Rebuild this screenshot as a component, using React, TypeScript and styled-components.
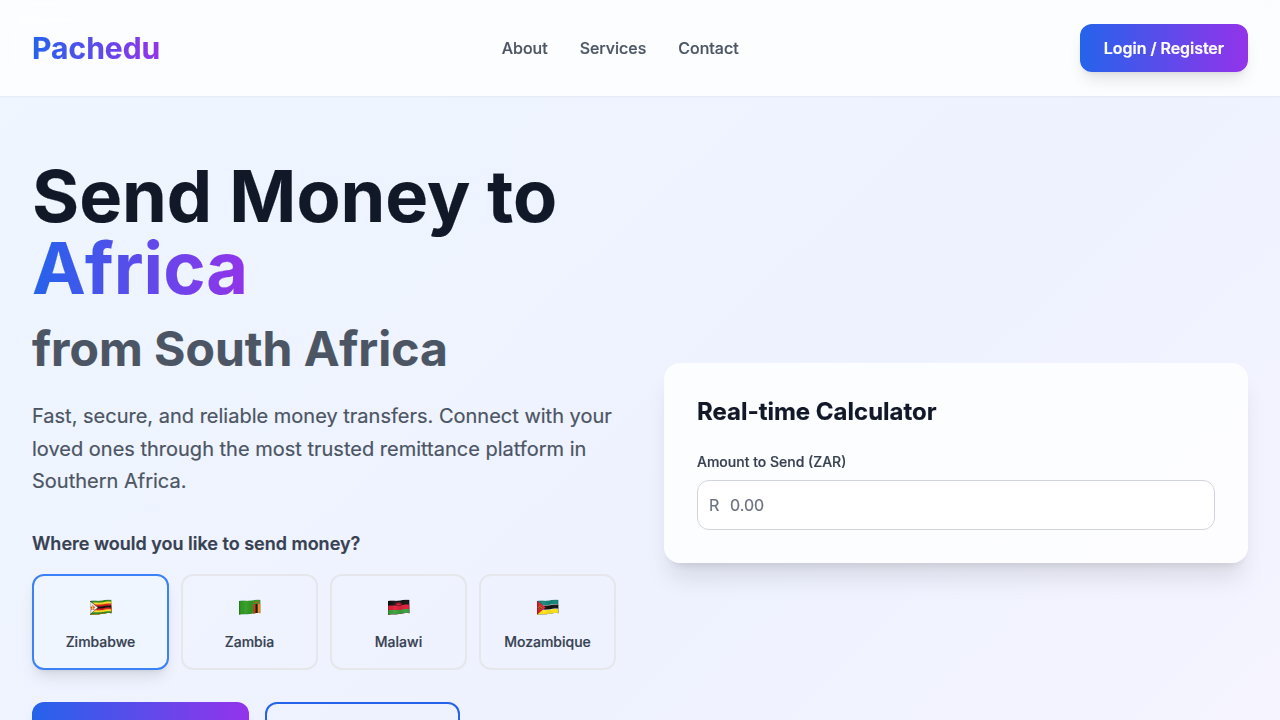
import React, { useId, useState } from 'react';
import styled, { createGlobalStyle, css } from 'styled-components';

const GlobalStyle = createGlobalStyle`
  *, *::before, *::after { box-sizing: border-box; }
  body {
    margin: 0;
    font-family: Inter, sans-serif;
    line-height: 1.5;
    color: #111827;
    -webkit-font-smoothing: antialiased;
    -webkit-text-stroke: 0.2px;
  }
  h1, h2, h3, p { margin: 0; }
  button, input { font: inherit; color: inherit; }
`;

const brandGradient = 'linear-gradient(to right, #2563eb, #9333ea)';
const softShadow = '0 10px 15px -3px rgba(0,0,0,.1), 0 4px 6px -4px rgba(0,0,0,.1)';

const Page = styled.div`
  height: 100vh;
  overflow: hidden;
  background: linear-gradient(to bottom right, #eff6ff, #eef2ff, #faf5ff) 0 0 / 100% 1240px no-repeat;
`;

const Header = styled.header`
  display: flex;
  align-items: center;
  justify-content: space-between;
  padding: 24px 32px;
  background: rgba(255, 255, 255, 0.8);
  backdrop-filter: blur(12px);
  box-shadow: 0 1px 2px 0 rgba(0, 0, 0, 0.05);
`;

const gradientText = css`
  background: ${brandGradient};
  background-clip: text;
  -webkit-background-clip: text;
  color: transparent;
`;

const Logo = styled.div`
  ${gradientText}
  font-size: 30px;
  line-height: 36px;
  font-weight: 700;
`;

const Nav = styled.nav`
  display: flex;
  gap: 32px;
`;

const NavLink = styled.a`
  color: #4b5563;
  font-weight: 500;
  text-decoration: none;
`;

const LoginButton = styled.button`
  width: 168px;
  border: 0;
  border-radius: 12px;
  padding: 12px 0;
  background: ${brandGradient};
  color: #fff;
  font-weight: 600;
  letter-spacing: -0.04px;
  white-space: nowrap;
  box-shadow: ${softShadow};
`;

const Hero = styled.main`
  display: grid;
  grid-template-columns: 1fr 1fr;
  gap: 48px;
  align-items: center;
  padding: 64px 32px;
`;

const Title = styled.h1`
  font-size: 72px;
  line-height: 1;
  font-weight: 700;
  margin-bottom: 24px;
`;

const Highlight = styled.span`
  ${gradientText}
`;

const Origin = styled.span`
  font-size: 48px;
  line-height: 1;
  color: #4b5563;
`;

const Lead = styled.p`
  font-size: 20px;
  line-height: 1.625;
  color: #4b5563;
  margin-bottom: 32px;
`;

const Question = styled.h3`
  font-size: 18px;
  line-height: 28px;
  font-weight: 600;
  color: #374151;
  margin-bottom: 16px;
`;

const Countries = styled.div`
  display: grid;
  grid-template-columns: repeat(4, 1fr);
  gap: 12px;
  margin-bottom: 32px;
`;

const CountryButton = styled.button<{ $selected: boolean }>`
  display: flex;
  flex-direction: column;
  align-items: center;
  gap: 8px;
  padding: 16px;
  border: 2px solid ${p => (p.$selected ? '#3b82f6' : '#e5e7eb')};
  border-radius: 12px;
  background: ${p => (p.$selected ? '#eff6ff' : 'transparent')};
  box-shadow: ${p => (p.$selected ? softShadow : 'none')};
`;

const FlagBox = styled.span`
  display: flex;
  height: 32px;
  padding-top: 7px;
`;

const CountryName = styled.span`
  font-size: 14px;
  line-height: 20px;
  font-weight: 500;
  color: #374151;
`;

const Actions = styled.div`
  display: flex;
  gap: 16px;
`;

const Action = styled.button<{ $primary?: boolean }>`
  width: ${p => (p.$primary ? 217 : 195)}px;
  height: 64px;
  border-radius: 12px;
  border: ${p => (p.$primary ? '0' : '2px solid #2563eb')};
  background: ${p => (p.$primary ? brandGradient : 'transparent')};
  box-shadow: ${p => (p.$primary ? softShadow : 'none')};
`;

const Card = styled.section`
  padding: 32px;
  border: 1px solid rgba(255, 255, 255, 0.2);
  border-radius: 16px;
  background: rgba(255, 255, 255, 0.8);
  backdrop-filter: blur(12px);
  box-shadow: 0 20px 25px -5px rgba(0,0,0,.1), 0 8px 10px -6px rgba(0,0,0,.1);
`;

const CardTitle = styled.h2`
  font-size: 24px;
  line-height: 32px;
  font-weight: 700;
  margin-bottom: 24px;
`;

const Label = styled.label`
  display: block;
  font-size: 14px;
  line-height: 20px;
  font-weight: 500;
  color: #374151;
  margin-bottom: 8px;
`;

const Field = styled.div`
  display: flex;
  align-items: center;
  height: 50px;
  padding: 0 11px;
  border: 1px solid #d1d5db;
  border-radius: 12px;
  background: #fff;
`;

const Currency = styled.span`
  width: 21px;
  color: #6b7280;
`;

const AmountInput = styled.input`
  flex: 1;
  min-width: 0;
  height: 24px;
  padding: 0;
  border: 0;
  outline: 0;
  background: transparent;
  &::placeholder { color: #6b7280; opacity: 1; }
`;

type Band = [color: string, top: number];

// Top edge of a waving band that starts y units below the flag's top.
const wave = (y: number) =>
  `M0 ${y + 1.5}C4 ${y + 0.6} 7 ${y + 1.6} 11 ${y + 1.1}S18 ${y - 0.2} 21.5 ${y + 0.3}`;

const outline =
  'M0 1.5C4 .6 7 1.6 11 1.1S18 -.2 21.5 .3V13.9C18 13.3 15 14.1 11 14.6S4 14.6 0 15.3Z';

function WavingFlag({ bands, children }: { bands: Band[]; children?: React.ReactNode }) {
  const id = useId();
  return (
    <FlagBox>
      <svg width="22" height="16" viewBox="0 -.4 22 16">
        <defs>
          <clipPath id={`${id}c`}>
            <path d={outline} />
          </clipPath>
          <linearGradient id={`${id}s`} x1="0" x2="1" y1="0" y2="0">
            <stop offset="0" stopColor="#000" stopOpacity=".2" />
            <stop offset=".1" stopColor="#000" stopOpacity="0" />
            <stop offset=".3" stopColor="#fff" stopOpacity=".06" />
            <stop offset=".58" stopColor="#000" stopOpacity=".06" />
            <stop offset=".85" stopColor="#fff" stopOpacity=".04" />
            <stop offset="1" stopColor="#000" stopOpacity=".1" />
          </linearGradient>
        </defs>
        <g clipPath={`url(#${id}c)`}>
          {bands.map(([color, top]) => (
            <path key={top} d={`${wave(top)}V16H0Z`} fill={color} />
          ))}
          {children}
          <path d={outline} fill={`url(#${id}s)`} />
          <path d={outline} fill="none" stroke="#000" strokeOpacity=".15" strokeWidth=".8" />
        </g>
      </svg>
    </FlagBox>
  );
}

const ZimbabweFlag = () => (
  <WavingFlag
    bands={[
      ['#2f8a22', 0],
      ['#fbdc22', 2],
      ['#e0211d', 3.9],
      ['#111', 5.9],
      ['#e0211d', 7.9],
      ['#fbdc22', 9.8],
      ['#2f8a22', 11.7],
    ]}
  >
    <path d="M0 1.2L8.4 8L0 15.2Z" fill="#222" />
    <path d="M0 1.8L7.7 8.1L0 14.8Z" fill="#f5f4f0" />
    <path d="M2.8 5.2L3.6 7.2L5.5 7.4L4.1 8.8L4.6 10.9L2.7 9.8L1 11L1.4 8.8L.3 7.5L2 7.2Z" fill="#dc4a2c" />
    <path d="M2.2 6.2L3.2 6.5L3.1 8L3.9 9.6H1.9Z" fill="#f2c52e" />
  </WavingFlag>
);

const ZambiaFlag = () => (
  <WavingFlag bands={[['#309a22', 0]]}>
    <path d="M14.2 4.8L16.5 4.6V16H14.2Z" fill="#e8291c" />
    <path d="M16.5 4.6L18.8 4.4V16H16.5Z" fill="#15120d" />
    <path d="M18.8 4.4L21.5 4.4V16H18.8Z" fill="#f58b1d" />
    <path d="M14.2 2.2L16.8 2.7L17.7 2L18.5 2.6L21 1.7L19.3 3.7L17.7 4.2L15.6 3.6Z" fill="#b9581d" />
  </WavingFlag>
);

const MalawiFlag = () => (
  <WavingFlag
    bands={[
      ['#121212', 0],
      ['#dc1f38', 4.9],
      ['#38a03d', 9.4],
    ]}
  >
    <path d="M7.2 5.8A3.6 3.4 0 0 1 14.3 5.4" fill="#a3172a" fillOpacity=".8" />
    <path d="M8.8 5.9A2.1 2 0 0 1 12.9 5.6Z" fill="#dc1f38" />
  </WavingFlag>
);

const MozambiqueFlag = () => (
  <WavingFlag
    bands={[
      ['#138579', 0],
      ['#eef0ef', 4.4],
      ['#121212', 4.9],
      ['#eef0ef', 9],
      ['#ffe31b', 9.5],
    ]}
  >
    <path d="M0 1L8.6 8L0 15.4Z" fill="#d8232c" />
    <path d="M2.9 5.8L3.6 7.4L5.2 7.5L4 8.6L4.4 10.2L2.9 9.3L1.5 10.2L1.9 8.6L.7 7.6L2.2 7.4Z" fill="#d98a2a" />
    <path d="M1.5 9.8L4.3 7M1.8 7.4L4.3 9.8" stroke="#3b2a22" strokeWidth=".7" />
  </WavingFlag>
);

const countries = [
  { name: 'Zimbabwe', Flag: ZimbabweFlag },
  { name: 'Zambia', Flag: ZambiaFlag },
  { name: 'Malawi', Flag: MalawiFlag },
  { name: 'Mozambique', Flag: MozambiqueFlag },
];

export default function App() {
  const [selected, setSelected] = useState('Zimbabwe');
  return (
    <Page>
      <GlobalStyle />
      <Header>
        <Logo>Pachedu</Logo>
        <Nav>
          <NavLink>About</NavLink>
          <NavLink>Services</NavLink>
          <NavLink>Contact</NavLink>
        </Nav>
        <LoginButton>Login / Register</LoginButton>
      </Header>
      <Hero>
        <div>
          <Title>
            Send Money to <Highlight>Africa</Highlight>
            <br />
            <Origin>from South Africa</Origin>
          </Title>
          <Lead>
            Fast, secure, and reliable money transfers. Connect with your loved ones through the
            most trusted remittance platform in Southern Africa.
          </Lead>
          <Question>Where would you like to send money?</Question>
          <Countries>
            {countries.map(({ name, Flag }) => (
              <CountryButton
                key={name}
                $selected={name === selected}
                onClick={() => setSelected(name)}
              >
                <Flag />
                <CountryName>{name}</CountryName>
              </CountryButton>
            ))}
          </Countries>
          <Actions>
            <Action $primary />
            <Action />
          </Actions>
        </div>
        <Card>
          <CardTitle>Real-time Calculator</CardTitle>
          <Label htmlFor="amount">Amount to Send (ZAR)</Label>
          <Field>
            <Currency>R</Currency>
            <AmountInput id="amount" placeholder="0.00" />
          </Field>
        </Card>
      </Hero>
    </Page>
  );
}
